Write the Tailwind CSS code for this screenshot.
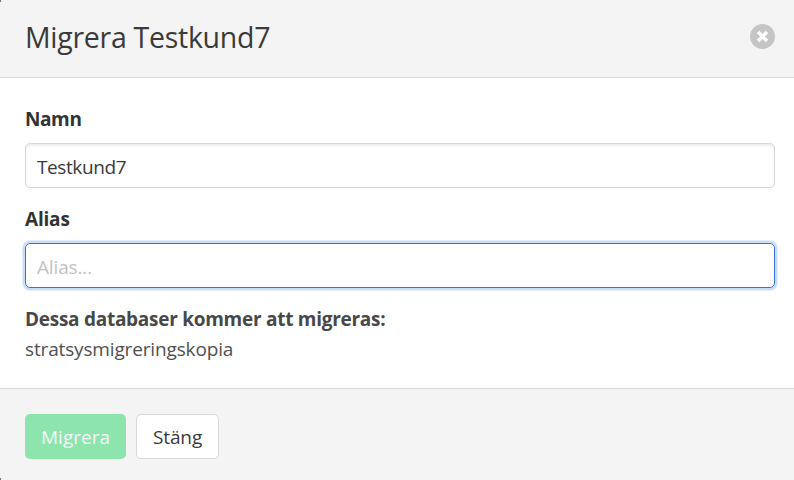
<!DOCTYPE html>
<html lang="sv"><head><meta charset="utf-8"><title>Migrera Testkund7</title>
<script src="https://cdn.jsdelivr.net/npm/@tailwindcss/browser@4"></script></head>
<body class="h-[480px] w-[794px] overflow-hidden bg-white font-['Open_Sans',sans-serif] text-[19px] leading-[30px] font-normal text-[#3a3a3a]">
<main class="flex h-full flex-col">
<header class="flex h-[78px] items-center justify-between border-b border-[#dadada] bg-[#f4f4f4] pr-[19px] pl-[25px]">
<h1 class="mb-[4px] text-[28.5px] leading-[40px] font-normal tracking-[-0.28px] whitespace-nowrap">Migrera Testkund7</h1>
<button class="mb-[4px]" aria-label="Stäng"><svg class="size-[25px]" viewBox="0 0 25 25"><circle cx="12.5" cy="12.5" r="12.5" fill="#c5c5c5"/><path d="M8 8l9 9m0-9l-9 9" stroke="#fff" stroke-width="3.5"/></svg></button>
</header>
<section class="flex h-[310px] flex-col pt-[26px] pr-[19px] pl-[25px]">
<label class="h-[30px] font-bold tracking-[-0.4px] text-[#333]">Namn</label>
<input class="mt-[9px] h-[45px] w-full rounded-[5px] border border-[#d8d8d8] px-[11px] pt-[2px] tracking-[-0.4px] shadow-[inset_0_2px_3px_#00000012]" value="Testkund7">
<label class="mt-[16px] h-[30px] font-bold tracking-[-0.2px] text-[#333]">Alias</label>
<input class="mt-[9px] h-[45px] w-full rounded-[5px] border border-[#3474da] px-[11px] pt-[2px] tracking-[-0.15px] shadow-[0_0_0_2px_#cbdcf6,0_0_0_3px_#e4edfb] outline-none placeholder:text-[#c2c2c2]" placeholder="Alias...">
<p class="mt-[16px] font-bold tracking-[-0.27px] text-[#484848]">Dessa databaser kommer att migreras:</p>
<p class="tracking-[-0.15px] text-[#505050]">stratsysmigreringskopia</p>
</section>
<footer class="flex h-[92px] gap-[10px] border-t border-[#dadada] bg-[#f4f4f4] pt-[25px] pl-[25px]">
<button class="h-[45px] w-[101px] rounded-[5px] bg-[#8de4ad] text-white/90">Migrera</button>
<button class="h-[45px] w-[83px] rounded-[5px] border border-[#d8d8d8] bg-white tracking-[-0.1px]">Stäng</button>
</footer>
</main>
<div class="absolute top-0 left-0 h-[2px] w-px bg-[#777]"></div>
<div class="absolute bottom-0 left-0 h-[2px] w-px bg-[#777]"></div>
</body></html>
